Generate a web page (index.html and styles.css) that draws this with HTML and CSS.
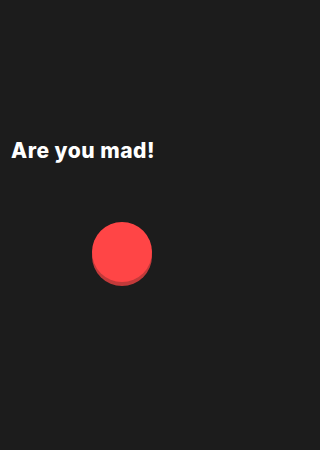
FILE: index.html
```html
<!DOCTYPE html>
<html>
<head>
<meta charset="utf-8">
<link rel="stylesheet" href="styles.css">
</head>
<body>
<main class="screen">
  <h1 class="title">Are you mad!</h1>
  <div class="button-row">
    <button class="big-button" aria-label="Press"></button>
  </div>
</main>
</body>
</html>
```

FILE: styles.css
```css
html, body {
  margin: 0;
  padding: 0;
  background: #1c1c1c;
}
.screen {
  width: 253px;
  height: 450px;
  display: flex;
  flex-direction: column;
  padding-top: 138px;
  box-sizing: border-box;
}
.title {
  margin: 0;
  padding-left: 11px;
  font-family: Inter, "Liberation Sans", sans-serif;
  font-weight: 800;
  font-size: 21px;
  line-height: 26px;
  letter-spacing: 0.5px;
  color: #ffffff;
}
.button-row {
  display: flex;
  padding-left: 92px;
  padding-top: 58px;
}
.big-button {
  width: 60px;
  height: 60px;
  border: none;
  padding: 0;
  border-radius: 50%;
  background: #ff4546;
  box-shadow: 0 4px 0 #c23a3a;
  cursor: pointer;
}
```
